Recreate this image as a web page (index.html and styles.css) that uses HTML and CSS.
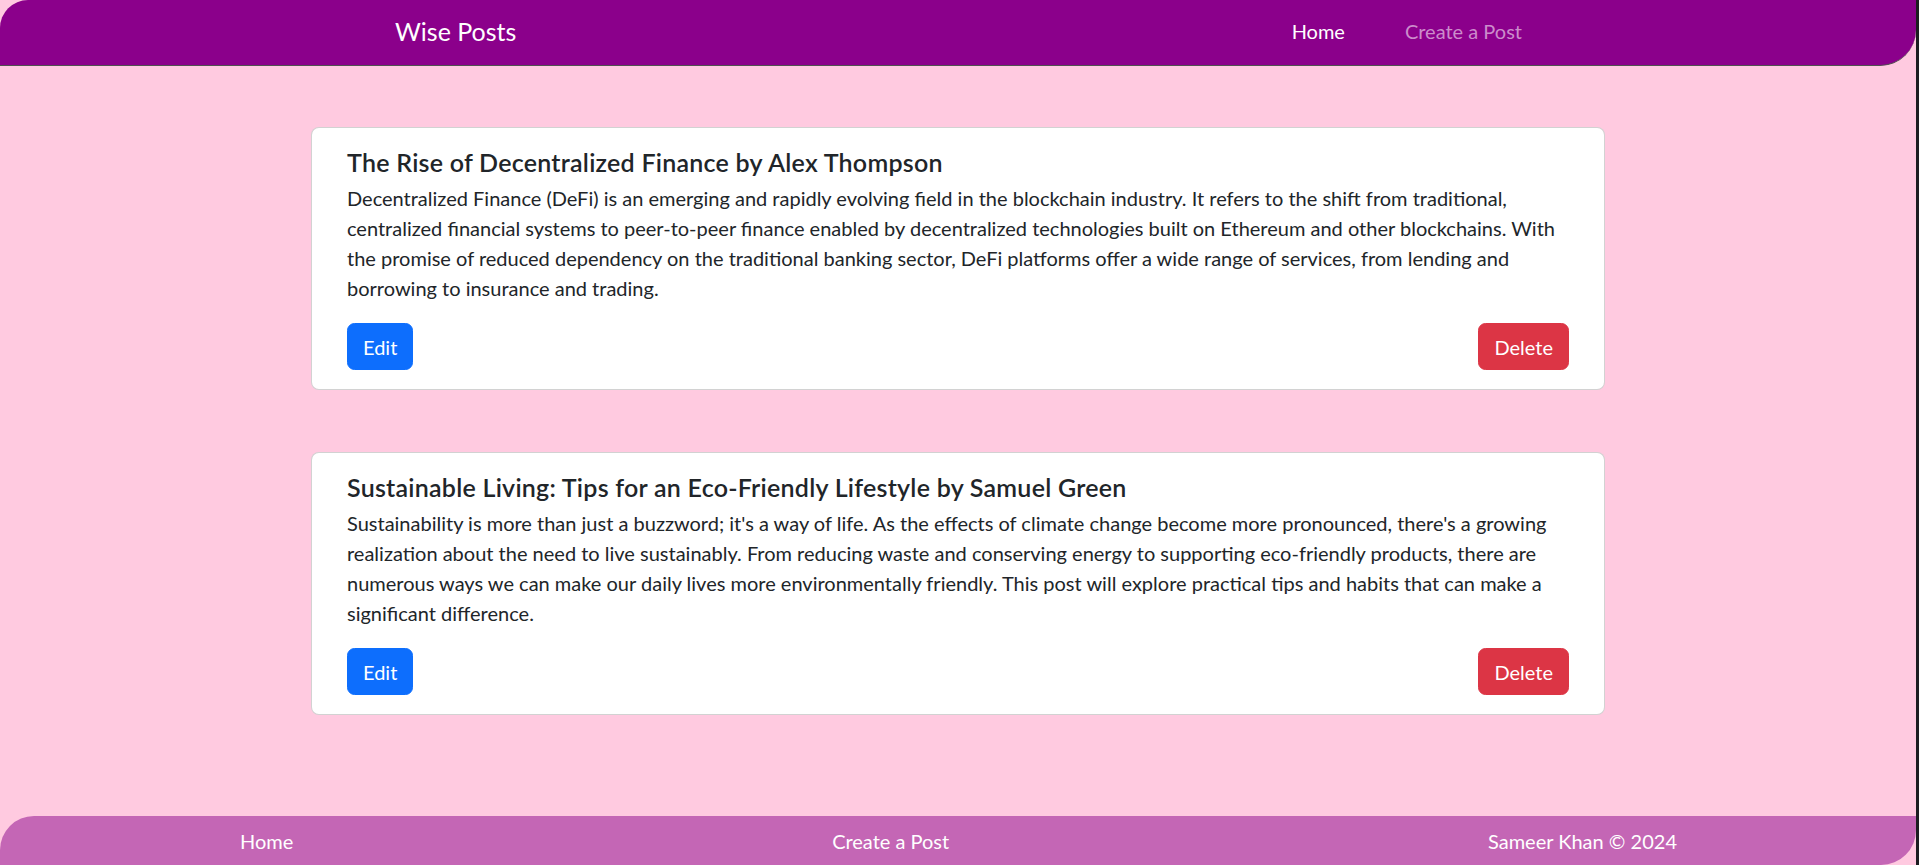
FILE: index.html
```html
<!DOCTYPE html>
<html lang="en">
<head>
<meta charset="utf-8">
<title>Wise Posts</title>
<link rel="stylesheet" href="styles.css">
</head>
<body>
<nav class="navbar">
  <a class="brand" href="#">Wise Posts</a>
  <div class="nav-links">
    <a class="nav-link active" href="#">Home</a>
    <a class="nav-link" href="#">Create a Post</a>
  </div>
</nav>
<main class="main">
  <div class="card">
    <h5 class="card-title">The Rise of Decentralized Finance by Alex Thompson</h5>
    <p class="card-text">Decentralized Finance (DeFi) is an emerging and rapidly evolving field in the blockchain industry. It refers to the shift from traditional, centralized financial systems to peer-to-peer finance enabled by decentralized technologies built on Ethereum and other blockchains. With the promise of reduced dependency on the traditional banking sector, DeFi platforms offer a wide range of services, from lending and borrowing to insurance and trading.</p>
    <div class="card-actions">
      <button class="btn btn-primary">Edit</button>
      <button class="btn btn-danger">Delete</button>
    </div>
  </div>
  <div class="card">
    <h5 class="card-title">Sustainable Living: Tips for an Eco-Friendly Lifestyle by Samuel Green</h5>
    <p class="card-text">Sustainability is more than just a buzzword; it's a way of life. As the effects of climate change become more pronounced, there's a growing realization about the need to live sustainably. From reducing waste and conserving energy to supporting eco-friendly products, there are numerous ways we can make our daily lives more environmentally friendly. This post will explore practical tips and habits that can make a significant difference.</p>
    <div class="card-actions">
      <button class="btn btn-primary">Edit</button>
      <button class="btn btn-danger">Delete</button>
    </div>
  </div>
</main>
<footer class="footer">
  <a class="footer-link" href="#">Home</a>
  <a class="footer-link" href="#">Create a Post</a>
  <span class="footer-link">Sameer Khan © 2024</span>
</footer>
</body>
</html>
```
FILE: styles.css
```css
html {
  background: #1c1d21;
}
body {
  margin: 0 3px 0 0;
  min-height: 100vh;
  display: flex;
  flex-direction: column;
  background: #ffcae0;
  font-family: "Lato", "Open Sans", sans-serif;
  font-size: 20px;
  line-height: 30px;
  color: #212529;
}
a {
  text-decoration: none;
}
.navbar {
  height: 66px;
  box-sizing: border-box;
  border-bottom: 1px solid #505050;
  background: #8b008b;
  border-radius: 28px 0 36px 0;
  display: flex;
  align-items: center;
  justify-content: space-between;
  padding: 0 394px 3px 395px;
}
.brand {
  color: #fff;
  font-size: 25px;
  line-height: 30px;
}
.nav-links {
  display: flex;
  gap: 60px;
}
.nav-link {
  color: #cb8ccb;
  font-size: 20px;
}
.nav-link.active {
  color: #fff;
}
.main {
  flex: 1;
  display: flex;
  flex-direction: column;
  align-items: center;
  gap: 62px;
  padding-top: 61px;
}
.card {
  width: 1294px;
  box-sizing: border-box;
  background: #fff;
  border: 1px solid rgba(0, 0, 0, 0.175);
  border-radius: 8px;
  padding: 19px 35px 19px 35px;
}
.card-title {
  margin: 0 0 6px 0;
  font-size: 25px;
  line-height: 30px;
  font-weight: 600;
  letter-spacing: 0.25px;
}
.card-text {
  margin: 0 0 20px 0;
}
.card-actions {
  display: flex;
  justify-content: space-between;
}
.btn {
  font-family: inherit;
  font-size: 20px;
  line-height: 30px;
  padding: 7.5px 15px;
  border: 1px solid transparent;
  border-radius: 7.5px;
  color: #fff;
  cursor: pointer;
}
.btn-primary {
  background: #0d6efd;
  border-color: #0d6efd;
}
.btn-danger {
  background: #dc3545;
  border-color: #dc3545;
}
.footer {
  height: 49px;
  background: #c466b5;
  border-radius: 34px 0 35px 0;
  display: flex;
  align-items: center;
  justify-content: space-between;
  padding: 0 239px 0 240px;
}
.footer-link {
  color: #fff;
  font-size: 20px;
}
```
